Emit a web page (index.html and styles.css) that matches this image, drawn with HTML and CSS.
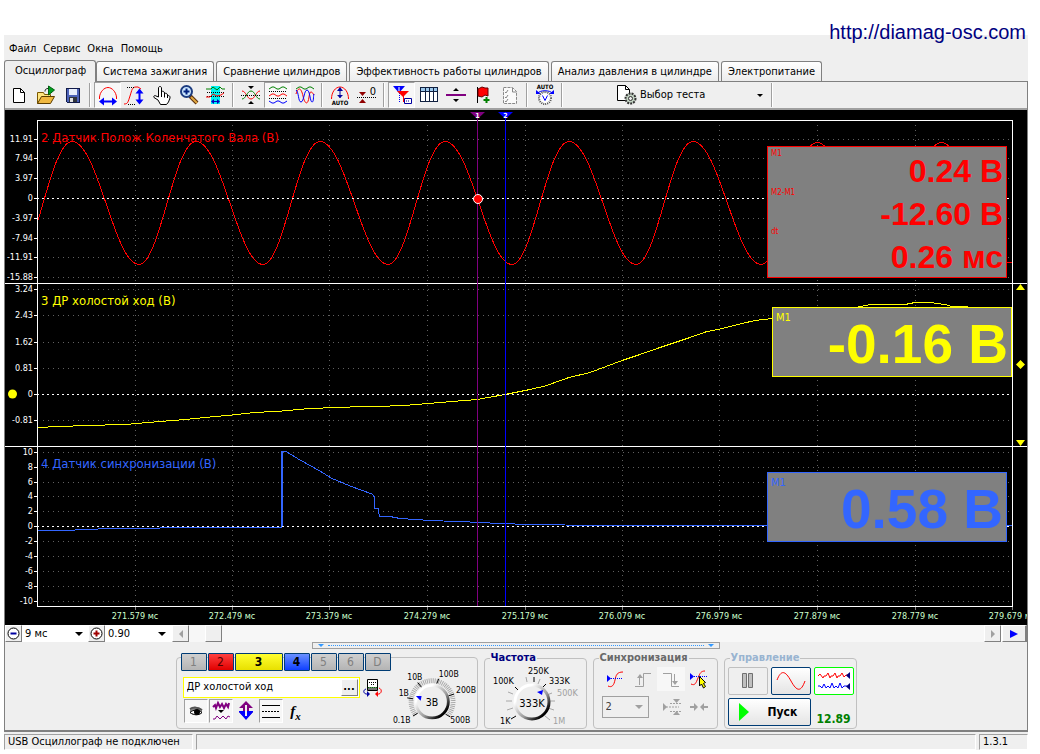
FILE: index.html
```
<!DOCTYPE html>
<html lang="ru">
<head>
<meta charset="utf-8">
<title>USB Осциллограф</title>
<link rel="stylesheet" href="styles.css">
</head>
<body>
<a class="site-link" href="http://diamag-osc.com">http://diamag-osc.com</a>
<div class="app">
  <nav class="menu">
    <button>Файл</button><button>Сервис</button><button>Окна</button><button>Помощь</button>
  </nav>
  <div class="tabs" role="tablist">
    <button class="tab tab-active" role="tab" aria-selected="true">Осциллограф</button>
    <button class="tab" role="tab">Система зажигания</button>
    <button class="tab" role="tab">Сравнение цилиндров</button>
    <button class="tab" role="tab">Эффективность работы цилиндров</button>
    <button class="tab" role="tab">Анализ давления в цилиндре</button>
    <button class="tab" role="tab">Электропитание</button>
  </div>
  <main class="pane">
    <div class="toolbar">
      <button class="tool" aria-label="Новый"><svg class="ico" viewBox="0 0 22 22"><path d="M5.500 4.500h7l4 4v10h-11z" fill="#fff" stroke="#000"/><path d="M12.500 4.500v4h4" fill="none" stroke="#000"/></svg></button>
      <button class="tool" aria-label="Открыть"><svg class="ico" viewBox="0 0 22 22"><path d="M2.500 19.500v-11h6l1 2h6v3" fill="#ffe680" stroke="#7a5800"/><path d="M2.500 19.500l4-7h13l-4 7z" fill="#f0b840" stroke="#5a3c00"/><path d="M13.500 2l6 4-6 5z" fill="#00a020" stroke="#006010"/><path d="M10 7.500c0-2 1-3 3-3" fill="none" stroke="#222"/></svg></button>
      <button class="tool" aria-label="Сохранить"><svg class="ico crisp" viewBox="0 0 22 22"><path d="M4.500 4.500h13v14h-12l-1-1z" fill="#4c62b8" stroke="#111a48"/><path d="M7 5h8v6H7z" fill="#e8eefc"/><path d="M7 13h8v5H7z" fill="#30343c"/><path d="M8 14h3v4H8z" fill="#e0e0e0"/></svg></button>
      <span class="sep"></span>
      <button class="tool tool-on" aria-label="Авто по времени"><svg class="ico" viewBox="0 0 22 22"><path d="M2.500 15v-2C3 8 7 3.500 11 3.500S19 8 19.500 13v2" fill="none" stroke="red"/><path d="M5 17.500h12" stroke="#00f" stroke-width="2"/><path d="M2 17.500l5-4v8zM20 17.500l-5-4v8z" fill="#00f"/></svg></button>
      <button class="tool" aria-label="Авто по амплитуде"><svg class="ico" viewBox="0 0 22 22"><path d="M0 20c4 0 4-2 6-8s2-9 6-9h2l3 2" fill="none" stroke="red"/><path d="M3 3.500h8M4 20.500h8" stroke="#000" stroke-dasharray="1 1"/><path d="M15.500 8v9" stroke="#00f" stroke-width="2"/><path d="M15.500 4.500l4 5h-8zM15.500 20.500l4-5h-8z" fill="#00f"/></svg></button>
      <button class="tool" aria-label="Рука"><svg class="ico" viewBox="0 0 22 22"><path d="M7.500 13V4c0-2 3-2 3 0v6-2c1-1.500 3-.500 3 1v1c1-1.500 3-.500 3 1v1c1-1 3 0 2.500 2l-1.500 4-2 2.500H9.500L7 16l-4-2.500c-1-1.500 1-2.500 2-1.500z" fill="#fff" stroke="#000"/><path d="M10.500 9v4M13.500 10v3.500M16.500 11v3" stroke="#000"/></svg></button>
      <button class="tool" aria-label="Лупа"><svg class="ico" viewBox="0 0 22 22"><path d="M12 12l7 7" stroke="#5a3010" stroke-width="4"/><path d="M13 13l6 6" stroke="#e0a840" stroke-width="2"/><circle cx="8.500" cy="7.500" r="5.500" fill="#cde8ff" stroke="#1c3c80" stroke-width="2"/><path d="M5.500 7.500h6M8.500 4.500v6" stroke="#002080" stroke-width="2"/></svg></button>
      <button class="tool" aria-label="Окно"><svg class="ico" viewBox="0 0 22 22"><path d="M6 2h9v18H6z" fill="#00f0f0"/><path d="M1 5h5l2-2 4 3 3-3 2 2h3" fill="none" stroke="green"/><path d="M2 8.500h18M2 12.500h18" stroke="#000" stroke-dasharray="1 1"/><path d="M1 13h4l3-3 4 2 4-1 3-2" fill="none" stroke="red"/><path d="M7 17.500h7" stroke="#0000c0"/><path d="M6 17.500l3-2.500v5zM15 17.500l-3-2.500v5z" fill="#0000c0"/></svg></button>
      <span class="sep"></span>
      <button class="tool" aria-label="Свести"><svg class="ico" viewBox="0 0 22 22"><path d="M2 7c4 0 5 8 9 8s5-8 9-8" fill="none" stroke="red"/><path d="M2 15c4 0 5-8 9-8s5 8 9 8" fill="none" stroke="green"/><path d="M1 11.500h20" stroke="#000" stroke-dasharray="1 1"/><path d="M8 2h6l-3 3zM8 20h6l-3-3z"/></svg></button>
      <button class="tool tool-on" aria-label="Разнести"><svg class="ico" viewBox="0 0 22 22"><g fill="none"><path d="M2 5l3-2h2l3 2h2l3-2h2l3 2" stroke="green"/><path d="M2 12l3-2h2l3 2h2l3-2h2l3 2" stroke="red"/><path d="M2 17l3 2h2l3-2h2l3 2h2l3-2" stroke="#00f"/><path d="M2 7.500h18M2 14.500h18" stroke="#000" stroke-dasharray="1 1"/></g></svg></button>
      <button class="tool" aria-label="Наложить"><svg class="ico" viewBox="0 0 22 22"><g fill="none"><path d="M2 5l3-2h2l3 2h2l3-2h2l3 2" stroke="green"/><path d="M2 10c2-7 5-7 7 2s5 9 6 1 3-5 5-2" stroke="red"/><path d="M2 6c3 2 2 12 5 12s3-12 6-12 3 12 5 12 1-5 2-8" stroke="#00f"/></g></svg></button>
      <span class="sep"></span>
      <button class="tool" aria-label="Авто"><svg class="ico" viewBox="0 0 22 22"><path d="M2.500 15c0-7 4-12 8.500-12s8.500 5 8.500 12" fill="none" stroke="red"/><path d="M11 4v10" stroke="#0000a0"/><path d="M11 3l3 4H8zM11 14l3-3H8z" fill="#0000a0"/><text class="micro" x="11" y="21">AUTO</text></svg></button>
      <button class="tool" aria-label="Ноль"><svg class="ico" viewBox="0 0 22 22"><path d="M1 13.500h20" stroke="#000" stroke-dasharray="1 1"/><path d="M3 8h7l-3.500 4zM3 19h7l-3.500-4z" fill="#900000"/><text class="zero" x="17" y="11">0</text></svg></button>
      <span class="sep"></span>
      <button class="tool tool-on" aria-label="Маркеры"><svg class="ico" viewBox="0 0 22 22"><path d="M2 2h12l-6 7z" fill="#00f"/><path d="M8.500 3v15" stroke="#00f" stroke-dasharray="1 1"/><path d="M6 7h12l-6 6z" fill="red"/><path d="M12.500 12v6" stroke="red"/><path d="M13.500 14.500h7v5h-7z" fill="#fff" stroke="#0000a0"/><path d="M15 17h4" stroke="#0000a0" stroke-dasharray="1 1"/><path d="M8 3v4" stroke="#fff"/></svg></button>
      <button class="tool" aria-label="Таблица"><svg class="ico crisp" viewBox="0 0 22 22"><path d="M2.500 3.500h17v14h-17z" fill="#fff" stroke="#102040"/><path d="M3 4h16v3H3z" fill="#9cc8ec"/><path d="M3 7.500h16M7.500 4v13M11.500 4v13M15.500 4v13" stroke="#102040"/></svg></button>
      <button class="tool" aria-label="Разделить"><svg class="ico" viewBox="0 0 22 22"><path d="M1 11h20" stroke="#800080" stroke-width="2"/><path d="M8 7h6l-3-3zM8 15h6l-3 3z"/></svg></button>
      <button class="tool" aria-label="Добавить метку"><svg class="ico" viewBox="0 0 22 22"><path d="M5.500 3v16" stroke="#000"/><path d="M6 5l4-2 3 1h3v8l-3-1-3 2-4-1z" fill="red" stroke="#600"/><path d="M14.500 13v6M11.500 16h6" stroke="green" stroke-width="2"/></svg></button>
      <button class="tool" aria-label="Список"><svg class="ico" viewBox="0 0 22 22"><path d="M4.500 3.500h9l4 4v12h-13z" fill="#fafafa" stroke="#888" stroke-dasharray="3 1"/><path d="M6 8l1 1 2-3M6 13l1 1 2-3M6 17l1 1 2-3M13.500 4v4h4" fill="none" stroke="#888"/></svg></button>
      <span class="sep"></span>
      <button class="tool" aria-label="Авто напряжение"><svg class="ico" viewBox="0 0 22 22"><text class="micro" x="11" y="5">AUTO</text><path d="M4 9c2-3 12-3 14 0" fill="none" stroke="#00f"/><path d="M2 6v4h5zM20 6v4h-5z" fill="#00f"/><circle cx="11" cy="14" r="6" fill="#fff" stroke="#555" stroke-width="2" stroke-dasharray="1 1"/><path d="M8.500 11.500l2.500 5 2.500-5" fill="none" stroke="#00f"/></svg></button>
      <span class="sep"></span>
      <button class="test"><svg class="ico" viewBox="0 0 22 22"><path d="M2.500 1.500h8l4 4v11h-12z" fill="#fff" stroke="#000"/><path d="M10.500 1.500v4h4" fill="none" stroke="#000"/><circle cx="15.500" cy="14.500" r="5" fill="#c4d4c4" stroke="#333" stroke-width="2" stroke-dasharray="2 1"/><circle cx="15.500" cy="14.500" r="2" fill="#eee" stroke="#333"/></svg><span class="test-name">Выбор теста</span><span class="caret"></span></button>
      <span class="sep"></span>
    </div>

    <svg class="plot" viewBox="5 110 1022 515" role="img" aria-label="Осциллограммы">
      <defs><clipPath id="area"><path d="M38 121h974v485H38z"/></clipPath></defs>
      <path class="bg" d="M5 110h1022v515H5z"/>
      <g class="grid">
        <path d="M135.500 125V606M232.500 125V606M329.500 125V606M427.500 125V606M525.500 125V606M622.500 125V606M719.500 125V606M817.500 125V606M915.500 125V606"/>
        <path d="M43 139.500H1012M43 158.500H1012M43 178.500H1012M43 218.500H1012M43 238.500H1012M43 257.500H1012M43 277.500H1012M43 289.500H1012M43 315.500H1012M43 342.500H1012M43 368.500H1012M43 420.500H1012M43 452.500H1012M43 467.500H1012M43 482.500H1012M43 496.500H1012M43 511.500H1012M43 541.500H1012M43 556.500H1012M43 571.500H1012M43 586.500H1012M43 601.500H1012"/>
      </g>
      <g clip-path="url(#area)" class="trace">
        <path class="t-red" d="M15 264.500C36 264.500 50 141.500 72 141.500C98 141.500 114 264.500 139 264.500C160 264.500 174 141.500 196 141.500C222 141.500 238 264.500 263 264.500C284 264.500 298 141.500 320 141.500C346 141.500 363 264.500 388 264.500C409 264.500 423 141.500 445 141.500C471 141.500 487 264.500 512 264.500C533 264.500 547 141.500 569 141.500C595 141.500 611 264.500 636 264.500C657 264.500 671 141.500 693 141.500C719 141.500 736 264.500 761 264.500C781 264.500 795 142.500 817 142.500C843 142.500 860 264.500 885 264.500C905 264.500 919 142.500 941 142.500C967 142.500 984 262.500 1009 262.500H1012"/>
        <path class="t-yellow" d="M37 427.500L60 426.500L86 425.500L125 424.500L160 421.500L185 419.500L210 417L232 415L255 412.500L282 411L310 408.500L350 407L380 406.500L410 405L440 402.500L477 399.500L505 394.500L530 389.500L545 386L569 377.500L590 372.500L622 360.500L640 354.500L660 347.500L690 337.500L707 331.500L720 329L740 324L755 320.500L772 318.500L858 307L870 304.500L905 304.500L915 302.500H930L945 304.500L952 306.500H968"/>
        <path class="t-blue" d="M37 531L60 530.500L75 530L110 528.500L160 528L281 527.500V490M283 451.500H286L300 460L320 471L331 478L350 486L372 494L374.500 497V508H378L379.500 517L390 516.500L400 518.500L430 520.500L470 522L500 523.500L530 524.500L600 525.500L640 525.500H1012"/>
        <path class="t-blue t-step" d="M282 451V527"/>
      </g>
      <g class="zero-line"><path d="M37 198.500H1012M37 394.500H1012M37 526.500H1012"/></g>
      <g class="frame"><path d="M37.500 606.500V120.500H1012.500V606.500ZM5 283.500H1027M5 446.500H1027"/>
        <path d="M34 139.500h3M34 158.500h3M34 178.500h3M34 198.500h3M34 218.500h3M34 238.500h3M34 257.500h3M34 277.500h3M34 289.500h3M34 315.500h3M34 342.500h3M34 368.500h3M34 394.500h3M34 420.500h3M34 452.500h3M34 467.500h3M34 482.500h3M34 496.500h3M34 511.500h3M34 526.500h3M34 541.500h3M34 556.500h3M34 571.500h3M34 586.500h3M34 601.500h3"/></g>
      <path class="x-ticks" d="M135.500 607v3M232.500 607v3M329.500 607v3M427.500 607v3M525.500 607v3M622.500 607v3M719.500 607v3M817.500 607v3M915.500 607v3M1012.500 607v3"/>
      <path class="m1" d="M477.500 118V606"/><path class="m2" d="M505.500 118V606"/>
      <path class="m1-flag" d="M470 112h15l-7.500 7z"/><path class="m2-flag" d="M498 112h15l-7.500 7z"/>
      <text class="flag-text" x="477.500" y="118">1</text><text class="flag-text" x="505.500" y="118">2</text>
      <circle class="point" cx="478" cy="199" r="4.500"/>
      <g class="y-text">
        <text x="33" y="142">11.91</text><text x="33" y="161">7.94</text><text x="33" y="181">3.97</text><text x="33" y="201">0</text><text x="33" y="221">-3.97</text><text x="33" y="241">-7.94</text><text x="33" y="260">-11.91</text><text x="33" y="280">-15.88</text>
        <text x="33" y="292">3.24</text><text x="33" y="318">2.43</text><text x="33" y="345">1.62</text><text x="33" y="371">0.81</text><text x="33" y="397">0</text><text x="33" y="423">-0.81</text>
        <text x="33" y="455">10</text><text x="33" y="470">8</text><text x="33" y="485">6</text><text x="33" y="499">4</text><text x="33" y="514">2</text><text x="33" y="529">0</text><text x="33" y="544">-2</text><text x="33" y="559">-4</text><text x="33" y="574">-6</text><text x="33" y="589">-8</text><text x="33" y="604">-10</text>
      </g>
      <g class="x-text">
        <text x="135" y="619">271.579 мс</text><text x="232" y="619">272.479 мс</text><text x="329" y="619">273.379 мс</text><text x="427" y="619">274.279 мс</text><text x="525" y="619">275.179 мс</text><text x="622" y="619">276.079 мс</text><text x="719" y="619">276.979 мс</text><text x="817" y="619">277.879 мс</text><text x="915" y="619">278.779 мс</text><text x="1012" y="619">279.679 мс</text>
      </g>
      <g class="channel-name"><text class="f-red" x="41" y="142">2 Датчик Полож Коленчатого Вала (В)</text><text class="f-yellow" x="41" y="305">3 ДР холостой ход (В)</text><text class="f-blue" x="41" y="468">4 Датчик синхронизации (В)</text></g>
      <g class="f-yellow"><circle cx="12.500" cy="394" r="4.500"/><path d="M1016 290h9l-4.500-6zM1016 440h9l-4.500 6zM1020.500 360l4.500 4.500-4.500 4.500-4.500-4.500z"/></g>
      <rect class="card t-red" x="767.500" y="146.500" width="239" height="131"/>
      <rect class="card t-yellow" x="772.500" y="307.500" width="239" height="69"/>
      <rect class="card t-blue" x="767.500" y="472.500" width="239" height="69"/>
      <g class="f-red"><g class="small"><text x="771" y="156">M1</text><text x="771" y="195">M2-M1</text><text x="771" y="234">dt</text></g>
        <g class="value"><text x="1003" y="182">0.24 В</text><text x="1003" y="225">-12.60 В</text><text x="1003" y="268">0.26 мс</text></g></g>
      <g class="f-yellow"><text class="label" x="776" y="321">M1</text><text class="value value-big" x="1008" y="363">-0.16 В</text></g>
      <g class="f-blue"><text class="label" x="771" y="486">M1</text><text class="value value-big" x="1003" y="528">0.58 В</text></g>
    </svg>

    <div class="timebar">
      <button class="step" aria-label="Уменьшить время"><svg class="round" viewBox="0 0 13 13"><circle cx="6.500" cy="6.500" r="5.500"/><path d="M3.500 6.500h6" stroke="#0000a0" stroke-width="2"/></svg></button>
      <label class="pick"><select aria-label="Развертка"><option>9 мс</option></select><span class="caret"></span></label>
      <button class="step" aria-label="Увеличить масштаб"><svg class="round" viewBox="0 0 13 13"><circle cx="6.500" cy="6.500" r="5.500"/><path d="M3.500 6.500h6M6.500 3.500v6" stroke="#a00000" stroke-width="2"/></svg></button>
      <label class="pick"><select aria-label="Масштаб"><option>0.90</option></select><span class="caret"></span></label>
      <button class="step scroll-left" aria-label="Влево"><span class="tri-left"></span></button>
      <div class="track"><span class="thumb"></span></div>
      <button class="step" aria-label="Вправо"><span class="tri-right"></span></button>
      <button class="step play" aria-label="Пуск прокрутки"><span class="tri-play"></span></button>
    </div>

    <div class="dock">
      <div class="grip"><span class="grip-tri"></span><span class="grip-dots"></span><span class="grip-tri"></span></div>
      <div class="groups">
        <section class="group channel">
          <div class="channel-left">
            <div class="ch-row"><button class="ch">1</button><button class="ch ch-red">2</button><button class="ch ch-yellow">3</button><button class="ch ch-blue">4</button><button class="ch">5</button><button class="ch">6</button><button class="ch">D</button></div>
            <div class="name-row"><div class="name-box"><input aria-label="Название канала" value="ДР холостой ход"><button aria-label="Выбрать">...</button></div>
              <button class="flat" aria-label="Датчик"><svg class="ico" viewBox="0 0 22 22"><path d="M5.500 2.500h10v11h-10z" fill="#fff" stroke="#000"/><path d="M6 10h9v3H6z" fill="#707070"/><path d="M6 10.500h9" stroke="green" stroke-dasharray="1 1"/><path d="M7 5.500h7M9 7.500h4" stroke="#000" stroke-dasharray="1 1"/><path d="M4 12c-3 1-3 4 0 5h3" fill="none" stroke="#0000a0"/><path d="M5 14v6l3-3z" fill="#0000a0"/><path d="M17 11c3 1 3 5 0 6h-3" fill="none" stroke="red"/><path d="M16 14v6l-3-3z" fill="red"/></svg></button></div>
            <div class="view-row">
              <button class="view view-on" aria-label="Видимость"><svg class="ico" viewBox="0 0 22 22"><path d="M5 9c3-3 9-3 12 1v3c-3 3-9 3-12 0z" fill="#888"/><path d="M5 12.500c3-3 8-3 12 0-3 3-8 3-12 0z" fill="#fff" stroke="#000"/><circle cx="12" cy="12" r="3"/><path d="M5 9c3-2 8-2 12 1" fill="none" stroke="#555" stroke-width="2"/></svg></button>
              <button class="view view-on" aria-label="Фильтр"><svg class="ico" viewBox="0 0 22 22"><path d="M3 7l2-2 1 3 2-5 2 4 2-3 2 4 2-4 2 3 1-4" fill="none" stroke="#800080" stroke-width="2"/><path d="M8 10h6l-3 3z"/><path d="M3 19h2l2-3 3 3 3-3 3 3 2-3 2 1" fill="none" stroke="#800080"/></svg></button>
              <button class="view" aria-label="Сдвиг"><svg class="ico" viewBox="0 0 22 22"><path d="M11 1l7 7h-4v4h4l-7 7-7-7h4V8H4z" fill="#800080"/><path d="M4 11h14v1l-7 8-7-8z" fill="#00f"/><path d="M11 5v11" stroke="#efefef" stroke-width="2"/><path d="M4 10h3M15 10h3" stroke="#efefef" stroke-width="2"/></svg></button>
              <button class="view view-on" aria-label="Уровни"><svg class="ico crisp" viewBox="0 0 22 22"><path d="M2 5.500h18M2 17.500h18" stroke="#000"/><path d="M2 11.500h18" stroke="#000" stroke-dasharray="2 1"/></svg></button>
              <button class="view fx" aria-label="Функция">f<sub>x</sub></button>
            </div>
          </div>
          <svg class="knob" viewBox="387 661 90 67" role="img" aria-label="Чувствительность 3В">
            <defs><linearGradient id="rim" x1="0" y1="0" x2="1" y2="1"><stop offset=".25" stop-color="#fff"/><stop offset=".6" stop-color="#999"/><stop offset=".85" stop-color="#000"/></linearGradient></defs>
            <path d="M413 716A22 22 0 1 1 447 716" fill="none" stroke="#a8a8a8" stroke-width="5" stroke-dasharray="1 1"/>
            <path class="tick" d="M410 717l5-3M404 698l6 1M415 682l4 5M437 678l-2 5M453 694l-6 2M449 718l-5-3"/>
            <circle cx="430" cy="702" r="17" fill="#eee" stroke="url(#rim)" stroke-width="3"/>
            <path d="M413 696h6l-1 5z" fill="#00f"/>
            <text class="knob-value" x="430" y="707">3В</text>
            <g class="knob-text"><text x="389" y="724">0.1В</text><text x="395" y="696">1В</text><text x="404" y="679">10В</text><text x="437" y="676">100В</text><text x="455" y="693">200В</text><text x="449" y="724">500В</text></g>
          </svg>
        </section>
        <fieldset class="group freq"><legend>Частота</legend>
          <svg class="knob" viewBox="489 665 96 62" role="img" aria-label="Частота 333К">
            <path class="tick" d="M518 716l-5 3M517 687l4 4M536 677v5M548 684l-4 4"/>
            <path d="M509 710l6-2M508 701h6M510 692l5 2M528 677l1 5M542 679l-2 5M554 693l-5 2M557 701h-6M556 710l-6-2M552 720l-5-4" stroke="#a8a8a8"/>
            <circle cx="534" cy="702" r="17" fill="#eee" stroke="url(#rim)" stroke-width="3"/>
            <path d="M539 692l6-2-1 5z" fill="#00f"/>
            <text class="knob-value" x="534" y="707">333K</text>
            <g class="knob-text"><text x="502" y="724">1K</text><text x="495" y="684">100K</text><text x="530" y="674">250K</text><text x="551" y="684">333K</text><text class="off" x="559" y="696">500K</text><text class="off" x="555" y="724">1M</text></g>
          </svg>
        </fieldset>
        <fieldset class="group sync"><legend>Синхронизация</legend>
          <div class="sync-row">
            <button class="flat" aria-label="Синхронизация"><svg class="ico" viewBox="0 0 22 22"><path d="M4 18c4 2 6-1 7-6s2-8 8-8" fill="none" stroke="red"/><path d="M3 10.500h16" stroke="#00f" stroke-dasharray="1 1"/><path d="M3 7v7l4-3.500z" fill="#00f"/></svg></button>
            <button class="flat" aria-label="Фронт" disabled><svg class="ico" viewBox="0 0 22 22"><path d="M3 18.500h8.500v-13H19" fill="none" stroke="#a0a0a0"/><path d="M7.500 17V9" stroke="#a0a0a0"/><path d="M5 10h6L8 6z" fill="#a0a0a0"/></svg></button>
            <button class="flat shade" aria-label="Спад" disabled><svg class="ico" viewBox="0 0 22 22"><path d="M3 5.500h8.500v13H19" fill="none" stroke="#a0a0a0"/><path d="M14.500 6v8" stroke="#a0a0a0"/><path d="M12 13h6l-3 4z" fill="#a0a0a0"/></svg></button>
            <button class="flat" aria-label="Уровень"><svg class="ico" viewBox="0 0 22 22"><path d="M3 16c4 2 5-1 7-6s3-7 7-7" fill="none" stroke="red"/><path d="M2 8.500h18" stroke="#00f" stroke-dasharray="1 1"/><path d="M2 5v7l4-3.500z" fill="#00f"/><path d="M11.500 8.500l6 6-2 1 2 3-2 1.500-2-4-2 2z" fill="#ff0" stroke="#000"/></svg></button>
          </div>
          <div class="sync-row">
            <label class="pick pick-sync"><select aria-label="Канал синхронизации"><option>2</option></select><span class="caret"></span></label>
            <button class="flat" aria-label="Сужение" disabled><svg class="ico" viewBox="0 0 22 22"><path d="M3 11h16M10 7.500h11M10 15.500h11" stroke="#a0a0a0" stroke-dasharray="2 1"/><path d="M3 7v8l4-4zM13 3h7l-3.500 4zM13 19h7l-3.500-4z" fill="#a0a0a0"/></svg></button>
            <button class="flat" aria-label="Сведение" disabled><svg class="ico" viewBox="0 0 22 22"><path d="M2 11h6M14 11h6" stroke="#a0a0a0" stroke-width="2"/><path d="M6 7l4 4-4 4zM16 7l-4 4 4 4z" fill="#a0a0a0"/></svg></button>
          </div>
        </fieldset>
        <fieldset class="group control"><legend>Управление</legend>
          <div class="control-grid">
            <button class="big big-off" aria-label="Пауза"><svg class="pause" viewBox="0 0 14 18"><path d="M1.500 1.500h4v14h-4zM7.500 1.500h4v14h-4z" fill="#c0c0c0" stroke="#707070"/></svg></button>
            <button class="big" aria-label="Одиночный"><svg class="wave" viewBox="0 0 32 22"><path d="M2 10C6 0 10 0 16 11s10 11 14 0" fill="none" stroke="red"/></svg></button>
            <button class="big big-on" aria-label="Непрерывный"><svg class="wave" viewBox="0 0 32 22"><path d="M0 6l2-2 3 4 1-2h2l2-3 2 5 1-2h2l2-3 2 5 1-2h2l2-3 2 4 2-2h2" fill="none" stroke="red"/><path d="M0 16h2l2 2 2-4 2 4 2-2 2 2 2-5 2 5 2-2 2 2 2-5 2 5 2-2h3" fill="none" stroke="#00f"/><path d="M32 2v7l-4-3.500zM32 13v7l-4-3.500z" fill="#000080"/></svg></button>
            <button class="big run"><span class="tri-run"></span><span>Пуск</span></button>
            <output class="rate">12.89</output>
          </div>
        </fieldset>
      </div>
    </div>
  </main>
  <footer class="status"><div class="cell cell-state">USB Осциллограф не подключен</div><div class="cell cell-mid"></div><div class="cell cell-ver">1.3.1</div></footer>
</div>
</body>
</html>
```
FILE: styles.css
```
* { box-sizing: border-box; }
body {
  margin: 0;
  padding: 35px 12px 5px 4px;
  background: #fff;
  color: #000;
  font-family: "DejaVu Sans Condensed", "DejaVu Sans", sans-serif;
  font-size: 11px;
  line-height: 14px;
  position: relative;
}
button, select, input {
  font: inherit;
  color: inherit;
  margin: 0;
  padding: 0;
  border: 0;
  border-radius: 0;
  background: none;
}
.site-link {
  position: absolute;
  top: 20px;
  right: 14px;
  color: #000080;
  font: 20px/24px "Liberation Sans", Arial, sans-serif;
  text-decoration: none;
}
.app { background: #efefef; }

.menu { display: flex; gap: 7px; padding: 7px 5px 4px; }

.tabs { display: flex; align-items: flex-end; gap: 2px; height: 21px; }
.tab {
  height: 20px;
  padding: 0 6px;
  border: 1px solid #808080;
  border-bottom: 0;
  border-radius: 3px 3px 0 0;
  background: linear-gradient(#fff, #ececec);
  white-space: nowrap;
}
.tab-active {
  height: 22px;
  padding: 0 9px 2px 10px;
  margin: 0 -2px -1px 0;
  background: #efefef;
  position: relative;
}

.pane { border: 1px solid #808080; border-bottom-width: 2px; }
.toolbar { display: flex; align-items: center; height: 28px; border-bottom: 2px solid #a0a0a0; }
.tool, .flat { display: grid; place-items: center; width: 27px; height: 26px; flex: none; }
.tool-on, .view-on {
  border: 1px solid;
  border-color: #a0a0a0 #fff #fff #a0a0a0;
  background: #f7f7f7;
}
.ico { display: block; width: 22px; height: 22px; }
.crisp { shape-rendering: crispEdges; }
.micro { font: bold 6px "DejaVu Sans Condensed", sans-serif; text-anchor: middle; }
.zero { font: 11px "DejaVu Sans Condensed", sans-serif; text-anchor: middle; }
.sep { flex: none; width: 2px; height: 24px; margin: 0 3px; background: linear-gradient(90deg, #a0a0a0 50%, #fff 50%); }
.test { display: flex; align-items: center; gap: 3px; width: 202px; height: 26px; padding: 0 5px 0 49px; }
.test-name { flex: 1; text-align: left; }
.caret { width: 0; height: 0; border: 4px solid transparent; border-top-color: #000; border-bottom: 0; }
.test .caret { border-width: 3px 3px 0; }

.plot { display: block; width: 100%; height: auto; }
.bg { fill: #000; }
.grid { stroke: #606060; stroke-dasharray: 1 4; fill: none; shape-rendering: crispEdges; }
.trace { fill: none; shape-rendering: crispEdges; }
.t-red { stroke: #f00; }
.t-yellow { stroke: #ff0; }
.t-blue { stroke: #36f; }
.t-step { stroke-width: 2px; }
.f-red { fill: #f00; }
.f-yellow { fill: #ff0; }
.f-blue { fill: #36f; }
.zero-line { stroke: #fff; stroke-dasharray: 2 3; shape-rendering: crispEdges; }
.frame { stroke: #fff; fill: none; shape-rendering: crispEdges; }
.x-ticks { stroke: #808080; shape-rendering: crispEdges; }
.m1 { stroke: #800080; shape-rendering: crispEdges; }
.m2 { stroke: #00f; shape-rendering: crispEdges; }
.m1-flag { fill: #800080; }
.m2-flag { fill: #00f; }
.flag-text { fill: #fff; font-size: 7px; font-weight: bold; text-anchor: middle; }
.point { fill: #f00; stroke: #fff; }
.y-text { fill: #fff; font-size: 9px; text-anchor: end; }
.x-text { fill: #cfc; font-size: 9px; text-anchor: middle; }
.channel-name { font-size: 13px; }
.card { fill: #808080; shape-rendering: crispEdges; }
.small { font-size: 8px; }
.label { font-size: 11px; }
.value { font: bold 32px "Liberation Sans", Arial, sans-serif; text-anchor: end; }
.value-big { font-size: 55px; }

.timebar { display: flex; height: 17px; background: #fff; }
.step {
  display: grid;
  place-items: center;
  width: 17px;
  flex: none;
  border: 1px solid;
  border-color: #fff #808080 #808080 #fff;
  background: #efefef;
}
.round { width: 13px; height: 13px; fill: #fff; stroke: #000; }
.pick { display: flex; align-items: center; width: 66px; padding-right: 5px; background: #fff; }
.pick select { appearance: none; flex: 1; min-width: 0; padding-left: 3px; outline: 0; }
.scroll-left { margin-left: 1px; }
.track { flex: 1; padding-left: 16px; background: #f7f7f7; }
.thumb { display: block; width: 17px; height: 17px; border: 1px solid; border-color: #fff #808080 #808080 #fff; background: #efefef; }
.play { width: 25px; margin-left: 1px; border-right-width: 2px; }
.tri-left, .tri-right, .tri-play, .tri-run { width: 0; height: 0; border: 4px solid transparent; }
.tri-left { border-right-color: #a0a0a0; border-left: 0; }
.tri-right { border-left-color: #a0a0a0; border-right: 0; }
.tri-play { border-width: 4px 0 4px 8px; border-left-color: #00f; }

.dock { display: flex; flex-direction: column; align-items: center; }
.grip { display: flex; align-items: center; gap: 4px; width: 408px; height: 7px; padding: 0 5px; border: 1px solid #a0a0a0; }
.grip-tri { border: 3px solid transparent; border-top-color: #3399ff; border-bottom: 0; }
.grip-dots { flex: 1; border-top: 1px dotted #3399ff; }
.groups { display: flex; gap: 6px; padding-bottom: 1px; margin-top: 2px; }
.group { margin: 0; padding: 0; min-width: 0; border: 1px solid #c0c0c0; border-radius: 4px; height: 78px; }
.group legend { padding: 0 1px; margin-left: 5px; font: bold 11px/14px "DejaVu Sans Condensed", sans-serif; }
.channel { display: flex; justify-content: space-between; width: 302px; height: 72px; margin-top: 6px; }
.channel-left { flex: none; margin-top: -5px; padding-left: 4px; }
.ch-row { display: flex; gap: 1px; }
.ch { width: 26px; height: 18px; border: 1px solid #003c74; background: linear-gradient(#d0d0d0, #b4b4b4); color: #808080; font-size: 12px; border-radius: 1px; }
.ch-red { background: linear-gradient(#ff4040, #e00000); color: #500; }
.ch-yellow { width: 48px; background: linear-gradient(#ffff30, #e8e000); color: #000; font-weight: bold; }
.ch-blue { background: linear-gradient(#6a90ff, #1040ff); color: #000; font-weight: bold; }
.name-row { display: flex; align-items: center; padding: 4px 0 0 2px; }
.name-box { display: flex; width: 177px; height: 21px; border: 1px solid #ff0; background: #fff; }
.name-box input { flex: 1; min-width: 0; padding-left: 3px; }
.name-box button { width: 17px; margin: 1px; border: 1px solid; border-color: #fff #808080 #808080 #fff; background: #efefef; line-height: 8px; font-weight: bold; }
.name-row .flat { height: 22px; margin-top: 2px; }
.view-row { display: flex; gap: 1px; padding-left: 3px; }
.view { display: grid; place-items: center; width: 24px; height: 24px; }
.fx { display: block; font: italic bold 15px/20px "Liberation Serif", serif; }
.fx sub { font-size: 11px; line-height: 0; }
.knob { display: block; }
.channel .knob { width: 90px; height: 67px; margin-top: 3px; }
.freq { width: 103px; }
.freq .knob { width: 96px; height: 62px; margin: 0 auto; }
.tick { stroke: #000; }
.knob-text { font-size: 9px; }
.knob-value { font-size: 11px; text-anchor: middle; }
.off { fill: #a0a0a0; }
.freq legend { color: #000080; }
.sync { width: 125px; }
.sync legend { color: #696969; }
.sync-row { display: flex; align-items: center; padding-left: 7px; height: 28px; }
.sync .flat { height: 24px; width: 28px; }
.shade { background: #f7f7f7; }
.pick-sync { width: 47px; height: 22px; margin: 0 8px 0 1px; border: 1px solid #a0a0a0; background: #efefef; color: #404040; }
.pick-sync .caret { border-top-color: #a0a0a0; }
.control { width: 133px; }
.control legend { color: #99b4d1; }
.control-grid { display: grid; grid-template-columns: repeat(3, 40px); gap: 3px; padding: 2px 0 2px 3px; }
.big { display: grid; place-items: center; height: 28px; border: 1px solid #003c74; border-radius: 2px; background: linear-gradient(#fff, #e4e4e4); }
.big-off { border-color: #c0c0c0; background: #efefef; }
.big-on { border-color: #0f0; background: #fff; }
.pause { width: 14px; height: 18px; }
.wave { width: 32px; height: 22px; }
.run { grid-column: span 2; display: flex; align-items: center; gap: 19px; padding-left: 10px; font-weight: bold; font-size: 12px; }
.tri-run { border-width: 9px 0 9px 10px; border-left-color: #0f0; }
.rate { align-self: end; text-align: center; color: #008000; font-weight: bold; font-size: 12px; }

.status { display: flex; gap: 3px; padding-top: 2px; }
.cell { height: 16px; padding: 0 3px; border: 1px solid; border-color: #a0a0a0 #fff #fff #a0a0a0; white-space: nowrap; }
.cell-state { width: 189px; }
.cell-mid { flex: 1; }
.cell-ver { width: 49px; }
```
